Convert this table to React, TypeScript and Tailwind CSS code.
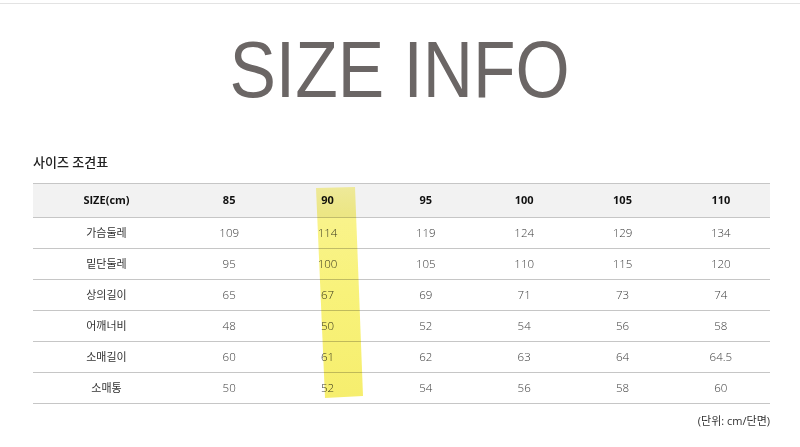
import React from "react";

const cols = ["85", "90", "95", "100", "105", "110"];
const rows: [string, string[]][] = [
  ["가슴둘레", ["109", "114", "119", "124", "129", "134"]],
  ["밑단둘레", ["95", "100", "105", "110", "115", "120"]],
  ["상의길이", ["65", "67", "69", "71", "73", "74"]],
  ["어깨너비", ["48", "50", "52", "54", "56", "58"]],
  ["소매길이", ["60", "61", "62", "63", "64", "64.5"]],
  ["소매통", ["50", "52", "54", "56", "58", "60"]],
];

const ko = { fontFamily: '"Open Sans", "Noto Sans CJK KR", sans-serif' };

export default function App() {
  return (
    <div className="relative w-[800px] h-[447px] overflow-hidden bg-white text-[#333]" style={ko}>
      <div className="mt-[3px] h-px bg-[#e3e3e3]" />
      <div className="mt-[26px] flex justify-center">
        <div
          className="text-[80px] leading-[80px] text-[#6b6665] scale-x-[0.87] whitespace-nowrap"
          style={{ fontFamily: '"Liberation Sans", Arial, sans-serif' }}
        >
          SIZE INFO
        </div>
      </div>
      <div className="ml-[33px] mt-[43px] text-[13px] leading-[18px] font-medium text-[#222]">
        사이즈 조견표
      </div>
      <div className="ml-[33px] mt-[12px] w-[737px] border-t border-[#c6c6c6]">
        <div className="grid grid-cols-[147px_repeat(6,1fr)] h-[34px] items-center bg-[#f2f2f2] border-b border-[#c6c6c6] text-[11px] font-bold text-[#111]">
          <div className="text-center">SIZE(cm)</div>
          {cols.map((c) => (
            <div key={c} className="text-center">{c}</div>
          ))}
        </div>
        {rows.map(([label, vals]) => (
          <div
            key={label}
            className="grid grid-cols-[147px_repeat(6,1fr)] h-[31px] items-center border-b border-[#c6c6c6] text-[11.5px] text-[#3a3a3a]"
          >
            <div className="text-center font-normal text-[11px] text-[#333]">{label}</div>
            {vals.map((v, i) => (
              <div key={i} className="text-center font-light">{v}</div>
            ))}
          </div>
        ))}
      </div>
      <div className="w-[770px] mt-[9px] text-right text-[11px] leading-[16px] text-[#333]">
        (단위: cm/단면)
      </div>
      <svg className="absolute left-0 top-0 pointer-events-none mix-blend-multiply" width="800" height="447">
        <defs>
          <linearGradient id="hl" x1="0" y1="0" x2="0" y2="1">
            <stop offset="0" stopColor="#fbf6a2" />
            <stop offset="0.12" stopColor="#f9f38c" />
            <stop offset="0.5" stopColor="#f8f27a" />
            <stop offset="1" stopColor="#f6ee6e" />
          </linearGradient>
        </defs>
        <polygon points="316,188 355,187 363,396 325,398" fill="url(#hl)" />
      </svg>
    </div>
  );
}
